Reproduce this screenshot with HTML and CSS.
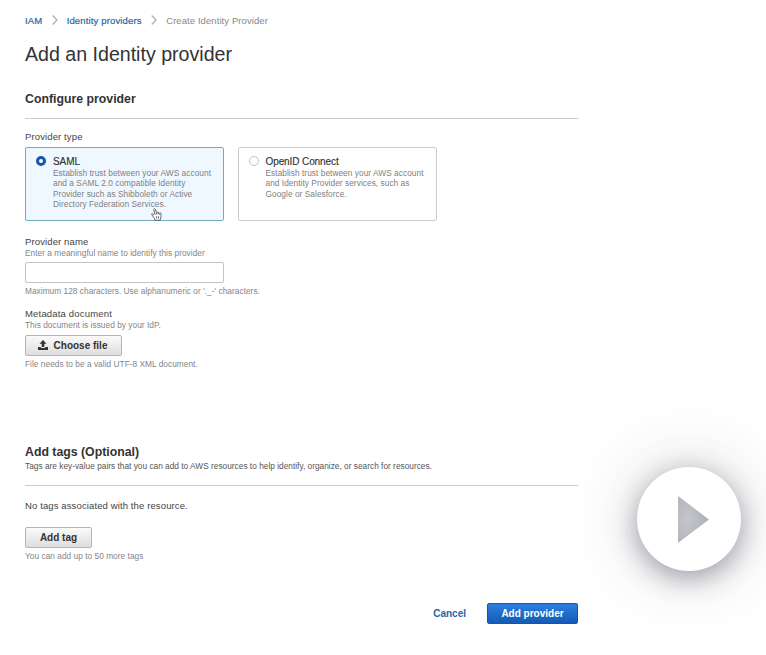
FILE: index.html
```
<!DOCTYPE html>
<html lang="en">
<head>
<meta charset="utf-8">
<title>Add an Identity provider</title>
<link rel="stylesheet" href="styles.css">
</head>
<body>
<main class="page">
  <nav class="crumbs">
    <a class="crumb-iam">IAM</a>
    <svg class="chev" viewBox="0 0 6 10"><path d="M.7.5 5 5 .7 9.500"/></svg>
    <a class="crumb-idp">Identity providers</a>
    <svg class="chev" viewBox="0 0 6 10"><path d="M.7.5 5 5 .7 9.500"/></svg>
    <span class="crumb-here">Create Identity Provider</span>
  </nav>
  <h1><span>Add an Identity provider</span></h1>
  <section>
    <h2 class="ruled"><span>Configure provider</span></h2>
    <div class="label type-label">Provider type</div>
    <div class="cards">
      <div class="card selected">
        <i class="radio"></i>
        <div>
          <div class="card-title">SAML</div>
          <p>Establish trust between your AWS account<br>and a SAML 2.0 compatible Identity<br>Provider such as Shibboleth or Active<br>Directory Federation Services.</p>
        </div>
        <svg class="hand" viewBox="0 0 11 13"><path d="M3 7 1.300 5.700Q.4 5.500.7 6.500L3.500 10.500 4 12.300H9L10 9V5.500Q9.500 4.500 8.700 5.300 8.300 4.200 7.100 4.800 6.700 3.800 5.400 4.400L4.300 1.200Q3.300.2 2.700 1.300L4 6.700M5.400 4.400V6.500M7.100 4.800V6.500M8.700 5.300V6.700M5.600 8.300V10.500M7.500 8.300V10.500"/></svg>
      </div>
      <div class="card">
        <i class="radio"></i>
        <div>
          <div class="card-title wide">OpenID Connect</div>
          <p>Establish trust between your AWS account<br>and Identity Provider services, such as<br>Google or Salesforce.</p>
        </div>
      </div>
    </div>
    <div class="field name-field">
      <label class="label" for="name">Provider name</label>
      <div class="help">Enter a meaningful name to identify this provider</div>
      <input id="name" type="text">
      <div class="help limit">Maximum 128 characters. Use alphanumeric or '._-' characters.</div>
    </div>
    <div class="field file-field">
      <div class="label meta-label">Metadata document</div>
      <div class="help issued">This document is issued by your IdP.</div>
      <button class="btn choose"><svg class="upload" viewBox="0 0 10 10"><path d="M5 0 8.500 3.700H6.300V7H3.700V3.700H1.500ZM0 7H2.800V8H7.200V7H10V10H0Z"/></svg><span>Choose file</span></button>
      <div class="help xml">File needs to be a valid UTF-8 XML document.</div>
    </div>
  </section>
  <section class="tags">
    <h2><span>Add tags (Optional)</span></h2>
    <p class="desc">Tags are key-value pairs that you can add to AWS resources to help identify, organize, or search for resources.</p>
    <p class="label none">No tags associated with the resource.</p>
    <button class="btn add-tag">Add tag</button>
    <div class="help more">You can add up to 50 more tags</div>
  </section>
  <footer>
    <a class="cancel">Cancel</a>
    <button class="btn primary">Add provider</button>
  </footer>
</main>
<div class="play"><svg viewBox="0 0 31 47"><defs><radialGradient id="g" cx=".3" cy=".5" r=".75"><stop offset="0" stop-color="#c5c5cd"/><stop offset="1" stop-color="#aeaeb5"/></radialGradient></defs><path fill="url(#g)" d="M0 0 31 23.500 0 47Z"/></svg></div>
</body>
</html>
```
FILE: styles.css
```
* { box-sizing: border-box; }
body { margin: 0; height: 655px; position: relative; overflow: hidden; background: #fff; color: #444; font-family: "Liberation Sans", Arial, sans-serif; }
h1, h2, p { margin: 0; }
.page { width: 578px; padding: 12px 0 0 25px; white-space: nowrap; }
.crumbs { display: flex; align-items: center; height: 16px; font-size: 9.5px; letter-spacing: .08px; color: #888; }
.crumbs a { color: #2468a5; -webkit-text-stroke: .2px #2468a5; }
.crumbs .crumb-idp { letter-spacing: .15px; }
.chev { width: 6px; height: 10px; margin: 0 9px 0 9.5px; fill: none; stroke: #b0b0b0; stroke-width: 1.3; }
h1 { margin-top: 12px; font-size: 19.6px; line-height: 28px; font-weight: 400; color: #333; }
h2 { font-size: 12.3px; line-height: 18px; color: #333; }
.ruled { margin-top: 21px; line-height: 20px; padding-bottom: 9px; border-bottom: 1px solid #ccc; }
.label { display: block; font-size: 9.5px; line-height: 12px; letter-spacing: .12px; color: #444; }
.type-label { margin-top: 12px; }
.meta-label { letter-spacing: .18px; }
.cards { display: flex; gap: 14px; margin-top: 4px; }
.card { position: relative; display: flex; gap: 7px; width: 199px; height: 74px; padding: 8px 0 0 10px; border: 1px solid #ccc; border-radius: 2px; }
.card.selected { border-color: #6faacc; background: #f0f8ff; }
.card + .card { margin-left: -.5px; }
.radio { flex: none; width: 10px; height: 10px; margin-top: 0; border: 1px solid #c4c4c4; border-radius: 50%; background: #fff; }
.selected .radio { border: 3px solid #1157aa; }
.card-title { font-size: 10px; line-height: 12px; letter-spacing: -.08px; color: #333; -webkit-text-stroke: .15px #333; }
.card-title.wide { letter-spacing: -.1px; }
.card p { font-size: 8.3px; line-height: 10.4px; letter-spacing: .05px; color: #808080; }
.hand { position: absolute; left: 125px; top: 60px; width: 11px; height: 13px; fill: #fff; stroke: #444; stroke-width: .8; }
.help { font-size: 8.3px; line-height: 11px; letter-spacing: .035px; color: #858585; }
.name-field { margin-top: 15px; }
input { display: block; width: 199px; height: 21px; margin: 3px 0; border: 1px solid #c3c3c3; border-radius: 2px; background: #fff; }
.file-field { margin-top: 11px; }
.btn { display: flex; align-items: center; justify-content: center; height: 21px; padding: 0; border: 1px solid #b5b5b5; border-radius: 2px; background: linear-gradient(#fafafa, #dedede); font: bold 10px "Liberation Sans", Arial, sans-serif; color: #333; }
.choose { width: 97px; margin: 4px 0 3px; padding-right: 2px; gap: 6px; }
.upload { width: 10px; height: 10px; margin-top: -1px; fill: #333; }
.tags { margin-top: 73px; }
.desc { font-size: 8.3px; line-height: 11px; letter-spacing: .01px; color: #555; padding-bottom: 13px; border-bottom: 1px solid #ccc; }
.none { margin-top: 14px; }
.add-tag { width: 67px; margin: 15px 0 3px; }
footer { display: flex; justify-content: flex-end; align-items: center; gap: 21px; margin-top: 41px; }
.cancel { font-size: 10px; font-weight: 700; color: #2565a5; }
.primary { width: 91px; border-color: #1457a5; background: linear-gradient(#2b7fe0, #145bb5); color: #fff; }
.play { position: absolute; left: 636.5px; top: 467px; width: 104px; height: 104px; border-radius: 50%; background: #fff; box-shadow: 0 0 70px rgba(60,60,70,.22), 0 7px 26px rgba(40,40,65,.4); }
.play svg { position: absolute; left: 41px; top: 29px; width: 31px; height: 47px; }
```
